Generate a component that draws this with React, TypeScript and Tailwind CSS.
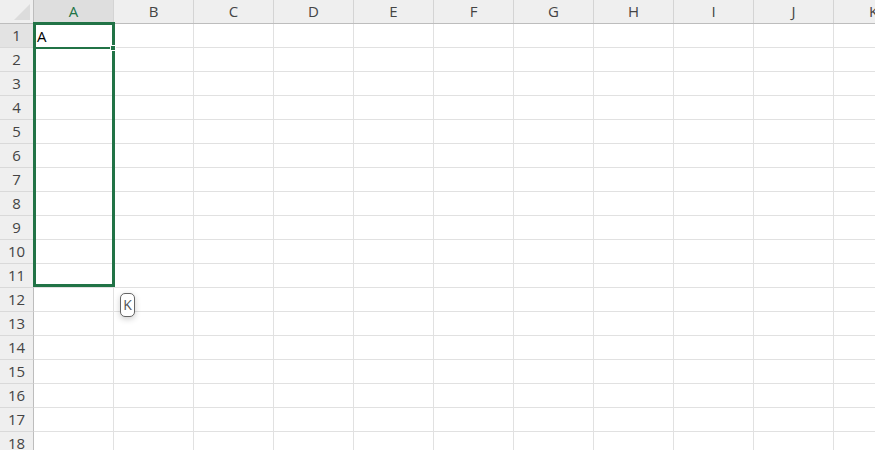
import React from 'react';

const COLS = ['A', 'B', 'C', 'D', 'E', 'F', 'G', 'H', 'I', 'J', 'K'];
const ROWS = Array.from({ length: 18 }, (_, i) => i + 1);

export default function App() {
  return (
    <div
      className="relative w-[875px] h-[450px] overflow-hidden bg-white text-[15px] text-[#444]"
      style={{ fontFamily: '"Open Sans", "Noto Sans", sans-serif' }}
    >
      {/* En-tête des colonnes */}
      <div className="flex h-[24px] border-b border-[#bdbdbd] bg-[#efefef]">
        <div className="w-[34px] shrink-0 border-r border-[#bdbdbd] relative">
          <svg className="absolute right-[3px] bottom-[3px]" width="16" height="16" viewBox="0 0 16 16">
            <polygon points="16,0 16,16 0,16" fill="#dcdcdc" />
          </svg>
        </div>
        {COLS.map((c) => (
          <div
            key={c}
            className={
              c === 'A'
                ? 'w-[80px] shrink-0 border-r border-[#d4d4d4] bg-[#dedede] text-[#217346] flex items-center justify-center leading-none'
                : 'w-[80px] shrink-0 border-r border-[#d4d4d4] flex items-center justify-center leading-none'
            }
          >
            {c}
          </div>
        ))}
      </div>

      {/* Lignes */}
      {ROWS.map((r) => (
        <div key={r} className="flex h-[24px]">
          <div
            className={
              r === 1
                ? 'w-[34px] shrink-0 border-r border-[#bdbdbd] border-b border-b-[#d9d9d9] bg-[#e3e3e3] flex items-center justify-center leading-none'
                : 'w-[34px] shrink-0 border-r border-[#bdbdbd] border-b border-b-[#d9d9d9] bg-[#efefef] flex items-center justify-center leading-none'
            }
          >
            {r}
          </div>
          {COLS.map((c) => (
            <div
              key={c}
              className="w-[80px] shrink-0 border-r border-b border-[#e1e1e1] flex items-end pl-[3px] pb-[1px] text-black leading-[20px]"
            >
              {r === 1 && c === 'A' ? 'A' : ''}
            </div>
          ))}
        </div>
      ))}

      {/* Cadre de sélection A1:A11 */}
      <div className="absolute left-[33px] top-[22px] w-[82px] h-[265px] border-[3px] border-[#217346]" />
      {/* Cellule active : trait sous A1 */}
      <div className="absolute left-[36px] top-[47px] w-[75px] h-[2px] bg-[#217346]" />
      {/* Poignée de recopie */}
      <div className="absolute left-[110px] top-[45px] w-[6px] h-[6px] bg-[#217346] border border-white" />

      {/* Indicateur K */}
      <div className="absolute left-[120px] top-[293px] w-[15px] h-[24px] rounded-[5px] border border-[#666] bg-white shadow-[0_2px_6px_rgba(0,0,0,0.2)] flex items-center justify-center text-[14px] text-[#555] leading-none">
        K
      </div>
    </div>
  );
}
